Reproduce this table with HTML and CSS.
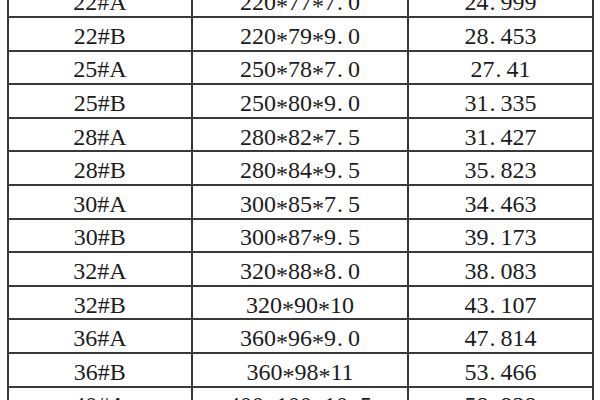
FILE: index.html
```html
<!DOCTYPE html>
<html>
<head>
<meta charset="utf-8">
<link rel="stylesheet" href="styles.css">
</head>
<body>
<div class="sheet">
<table class="grid">
<colgroup><col class="c1"><col class="c2"><col class="c3"></colgroup>
<tbody>
<tr><td>22#A</td><td>220<span class="ast">*</span>77<span class="ast">*</span>7<span class="dot">.</span>0</td><td>24<span class="dot">.</span>999</td></tr>
<tr><td>22#B</td><td>220<span class="ast">*</span>79<span class="ast">*</span>9<span class="dot">.</span>0</td><td>28<span class="dot">.</span>453</td></tr>
<tr><td>25#A</td><td>250<span class="ast">*</span>78<span class="ast">*</span>7<span class="dot">.</span>0</td><td>27<span class="dot">.</span>41</td></tr>
<tr><td>25#B</td><td>250<span class="ast">*</span>80<span class="ast">*</span>9<span class="dot">.</span>0</td><td>31<span class="dot">.</span>335</td></tr>
<tr><td>28#A</td><td>280<span class="ast">*</span>82<span class="ast">*</span>7<span class="dot">.</span>5</td><td>31<span class="dot">.</span>427</td></tr>
<tr><td>28#B</td><td>280<span class="ast">*</span>84<span class="ast">*</span>9<span class="dot">.</span>5</td><td>35<span class="dot">.</span>823</td></tr>
<tr><td>30#A</td><td>300<span class="ast">*</span>85<span class="ast">*</span>7<span class="dot">.</span>5</td><td>34<span class="dot">.</span>463</td></tr>
<tr><td>30#B</td><td>300<span class="ast">*</span>87<span class="ast">*</span>9<span class="dot">.</span>5</td><td>39<span class="dot">.</span>173</td></tr>
<tr><td>32#A</td><td>320<span class="ast">*</span>88<span class="ast">*</span>8<span class="dot">.</span>0</td><td>38<span class="dot">.</span>083</td></tr>
<tr><td>32#B</td><td>320<span class="ast">*</span>90<span class="ast">*</span>10</td><td>43<span class="dot">.</span>107</td></tr>
<tr><td>36#A</td><td>360<span class="ast">*</span>96<span class="ast">*</span>9<span class="dot">.</span>0</td><td>47<span class="dot">.</span>814</td></tr>
<tr><td>36#B</td><td>360<span class="ast">*</span>98<span class="ast">*</span>11</td><td>53<span class="dot">.</span>466</td></tr>
<tr><td>40#A</td><td>400<span class="ast">*</span>100<span class="ast">*</span>10<span class="dot">.</span>5</td><td>58<span class="dot">.</span>928</td></tr>
</tbody>
</table>
</div>
</body>
</html>
```

FILE: styles.css
```css
html, body {
  margin: 0;
  padding: 0;
  background: #ffffff;
  overflow: hidden;
}
body {
  width: 600px;
  height: 400px;
}
.sheet {
  margin: -17.6px 0 0 6.7px;
}
.grid {
  border-collapse: collapse;
  table-layout: fixed;
  width: 585.3px;
  font-family: "Liberation Serif", "Times New Roman", serif;
  font-size: 24px;
  color: #1c1c1c;
}
.c1 { width: 184.3px; }
.c2 { width: 216px; }
.c3 { width: 185px; }
.grid tr {
  height: 33.6px;
}
.grid td {
  border: 2px solid #3a3a3a;
  padding: 4px 0 0 0;
  line-height: 24px;
  text-align: center;
  vertical-align: middle;
  white-space: nowrap;
}
.dot {
  display: inline-block;
  width: 12px;
  text-align: left;
  padding-left: 1px;
  box-sizing: border-box;
}
.ast {
  vertical-align: -4px;
  line-height: 0;
}
```
